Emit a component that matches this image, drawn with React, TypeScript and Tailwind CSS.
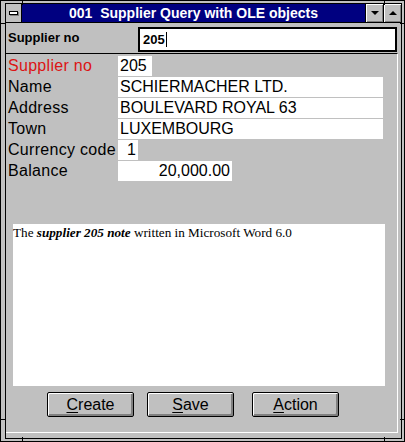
const raised = "shadow-[inset_1px_1px_0_#ffffff,inset_-1px_-1px_0_#808080]";

function Notches() {
  // little resize-corner ticks on the window frame
  return (
    <>
      <div className="absolute left-[21px] top-0 w-px h-[4px] bg-black" />
      <div className="absolute left-[383px] top-0 w-px h-[4px] bg-black" />
      <div className="absolute left-0 top-[22px] w-[5px] h-px bg-black" />
      <div className="absolute right-0 top-[22px] w-[4px] h-px bg-black" />
      <div className="absolute left-0 top-[418px] w-[5px] h-px bg-black" />
      <div className="absolute right-0 top-[418px] w-[4px] h-px bg-black" />
      <div className="absolute left-[21px] bottom-0 w-px h-[4px] bg-black" />
      <div className="absolute left-[383px] bottom-0 w-px h-[4px] bg-black" />
    </>
  );
}

function TitleBar() {
  return (
    <div className="h-[19px] border-b border-black flex">
      <div className="w-[16px] border-r border-black bg-[#c0c0c0] flex items-center justify-center">
        <div className="w-[9px] h-[4px] border border-black bg-white shadow-[1px_1px_0_#808080]" />
      </div>
      <div className="flex-1 bg-[#000080] text-white font-bold text-[14px] leading-[18px] text-center whitespace-pre">
        001  Supplier Query with OLE objects
      </div>
      <div className={`w-[18px] border-l border-black bg-[#c0c0c0] flex items-center justify-center ${raised}`}>
        <div className="w-0 h-0 border-l-[4px] border-r-[4px] border-t-[4px] border-l-transparent border-r-transparent border-t-black" />
      </div>
      <div className={`w-[18px] border-l border-black bg-[#c0c0c0] flex items-center justify-center ${raised}`}>
        <div className="w-0 h-0 border-l-[4px] border-r-[4px] border-b-[4px] border-l-transparent border-r-transparent border-b-black" />
      </div>
    </div>
  );
}

type Row = { label: string; value: string; w: string; right?: boolean; red?: boolean };

const rows: Row[] = [
  { label: "Supplier no", value: "205", w: "w-[34px]", red: true },
  { label: "Name", value: "SCHIERMACHER LTD.", w: "w-[265px]" },
  { label: "Address", value: "BOULEVARD ROYAL 63", w: "w-[265px]" },
  { label: "Town", value: "LUXEMBOURG", w: "w-[265px]" },
  { label: "Currency code", value: "1", w: "w-[20px]", right: true },
  { label: "Balance", value: "20,000.00", w: "w-[114px]", right: true },
];

function Btn({ first, rest, className }: { first: string; rest: string; className?: string }) {
  return (
    <div
      className={`w-[87px] h-[25px] border border-black rounded-[2px] bg-[#c0c0c0] text-[16px] leading-[23px] text-center text-black shadow-[inset_1px_1px_0_#ffffff,inset_-2px_-2px_0_#808080] ${className ?? ""}`}
    >
      <span className="underline underline-offset-[2px]">{first}</span>
      {rest}
    </div>
  );
}

export default function App() {
  return (
    <div className="w-[405px] h-[442px] bg-[#c0c0c0] border border-black pt-[2px] pl-[4px] pr-[2px] pb-[2px] flex relative font-['Liberation_Sans',Arial,sans-serif]">
      <Notches />
      <div className="flex-1 border border-black flex flex-col">
        <TitleBar />

        {/* query header */}
        <div className="h-[30px] flex pt-[4px] pl-[2px]">
          <div className="w-[130px] text-[13px] font-bold leading-[22px] text-black">Supplier no</div>
          <div className="w-[259px] h-[25px] border-2 border-black bg-white pl-[3px] flex items-center">
            <span className="text-[13px] font-bold text-black">205</span>
            <span className="w-px h-[15px] bg-black ml-[1px]" />
          </div>
        </div>

        <div className="flex-1 border-t border-black border-r border-r-white border-b border-b-white mr-[3px] mb-[5px] pt-[2px] flex flex-col">
          <div className="flex flex-col gap-px pl-[2px]">
            {rows.map((r) => (
              <div key={r.label} className="flex h-[20px] text-[16px] leading-[20px]">
                <div className={`w-[110px] whitespace-nowrap tracking-[0.3px] ${r.red ? "text-[#dc1414]" : "text-black"}`}>{r.label}</div>
                <div className={`${r.w} bg-white text-black px-[2px] whitespace-nowrap ${r.right ? "text-right" : ""}`}>
                  {r.value}
                </div>
              </div>
            ))}
          </div>

          {/* OLE memo object */}
          <div className="ml-[7px] mt-[43px] w-[372px] h-[162px] bg-white font-['Liberation_Serif','Times_New_Roman',serif] text-[13.2px] leading-[16px] text-black pt-px">
            The <b className="italic">supplier 205 note</b> written in Microsoft Word 6.0
          </div>

          <div className="flex mt-[6px] ml-[41px]">
            <Btn first="C" rest="reate" />
            <Btn first="S" rest="ave" className="ml-[13px]" />
            <Btn first="A" rest="ction" className="ml-[18px]" />
          </div>
        </div>
      </div>
    </div>
  );
}
